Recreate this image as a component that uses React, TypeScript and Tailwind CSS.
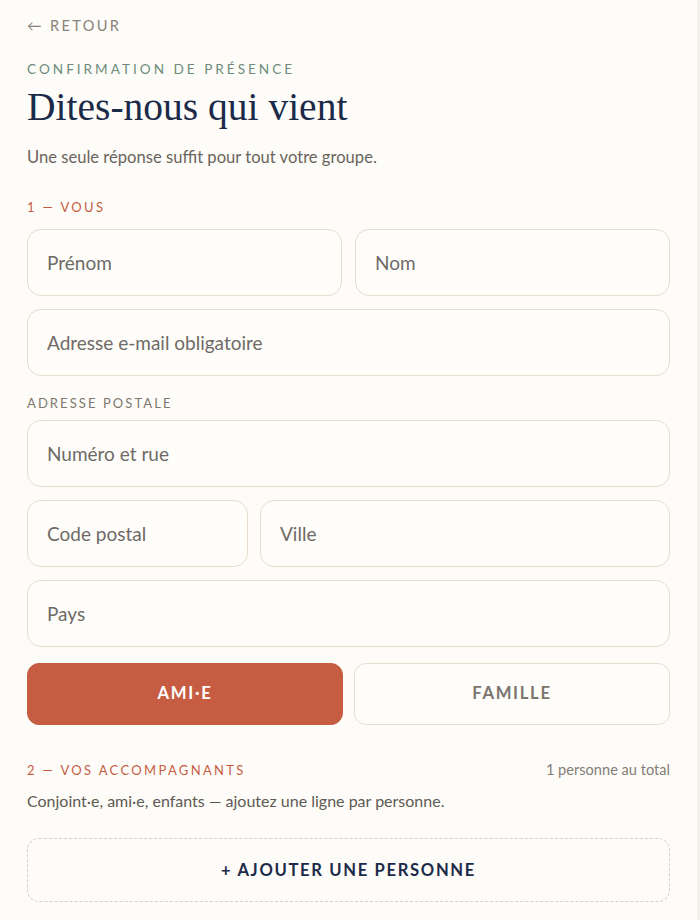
import { useState } from "react";

const inputClass =
  "block w-full h-[67px] rounded-[14px] border border-[#e6ddd0] bg-[#fefdfa] px-[19px] text-[19px] text-[#2b2b2b] placeholder:text-[#6f6a66] focus:outline-none";

const Field = ({ placeholder }: { placeholder: string }) => (
  <input type="text" className={inputClass} placeholder={placeholder} />
);

const choiceOn =
  "h-[62px] rounded-[12px] bg-[#c65d42] border border-[#c65d42] text-white text-[16.7px] font-bold tracking-[0.1em]";
const choiceOff =
  "h-[62px] rounded-[12px] bg-[#fefdfa] border border-[#e6ddd0] text-[#7b756d] text-[16.7px] font-bold tracking-[0.1em]";

const App = () => {
  const [type, setType] = useState<"ami" | "famille">("ami");

  return (
    <div
      className="min-h-[920px] w-full bg-[#fdfcf8] border-r-[3px] border-[#f3f1ec] pl-[27px] pr-[27px] pt-[16px]"
      style={{ fontFamily: "Lato, 'Noto Sans', sans-serif" }}
    >
      <a className="block text-[14.6px] leading-5 tracking-[0.16em] text-[#8a837a] uppercase cursor-pointer">
        ← Retour
      </a>

      <div className="mt-[24px] text-[13.6px] leading-[18px] tracking-[0.22em] text-[#6e8b7c] uppercase">
        Confirmation de présence
      </div>
      <h1
        className="mt-[7px] text-[39.5px] leading-[44px] text-[#1c2a4a]"
        style={{ fontFamily: "'Liberation Serif', 'DejaVu Serif', serif" }}
      >
        Dites-nous qui vient
      </h1>
      <p className="mt-[16px] text-[16.6px] leading-6 text-[#6b645d]">
        Une seule réponse suffit pour tout votre groupe.
      </p>

      <div className="mt-[29px] text-[13px] leading-[18px] tracking-[0.18em] text-[#c65d42] uppercase">
        1 — Vous
      </div>

      <div className="mt-[13px] flex flex-col gap-[13px]">
        <div className="grid grid-cols-2 gap-[13px]">
          <Field placeholder="Prénom" />
          <Field placeholder="Nom" />
        </div>
        <Field placeholder="Adresse e-mail obligatoire" />
      </div>

      <div className="mt-[18px] text-[13px] leading-[18px] tracking-[0.16em] text-[#7d776f] uppercase">
        Adresse postale
      </div>

      <div className="mt-[8px] flex flex-col gap-[13px]">
        <Field placeholder="Numéro et rue" />
        <div className="grid grid-cols-[221px_1fr] gap-[12px]">
          <Field placeholder="Code postal" />
          <Field placeholder="Ville" />
        </div>
        <Field placeholder="Pays" />
      </div>

      <div className="mt-[16px] grid grid-cols-2 gap-[11px]">
        <button onClick={() => setType("ami")} className={type === "ami" ? choiceOn : choiceOff}>
          AMI·E
        </button>
        <button onClick={() => setType("famille")} className={type === "famille" ? choiceOn : choiceOff}>
          FAMILLE
        </button>
      </div>

      <div className="mt-[36px] flex items-center justify-between">
        <div className="text-[13px] leading-[18px] tracking-[0.18em] text-[#c65d42] uppercase">
          2 — Vos accompagnants
        </div>
        <div className="text-[14.6px] leading-[18px] text-[#857e76]">1 personne au total</div>
      </div>
      <p className="mt-[11px] text-[16px] leading-[22px] text-[#5f5953]">
        Conjoint·e, ami·e, enfants — ajoutez une ligne par personne.
      </p>

      <button className="mt-[26px] h-[64px] w-full rounded-[12px] border border-dashed border-[#d8d0c4] text-[16.6px] font-bold tracking-[0.1em] text-[#1c2a4a]">
        + AJOUTER UNE PERSONNE
      </button>
    </div>
  );
};

export default App;
